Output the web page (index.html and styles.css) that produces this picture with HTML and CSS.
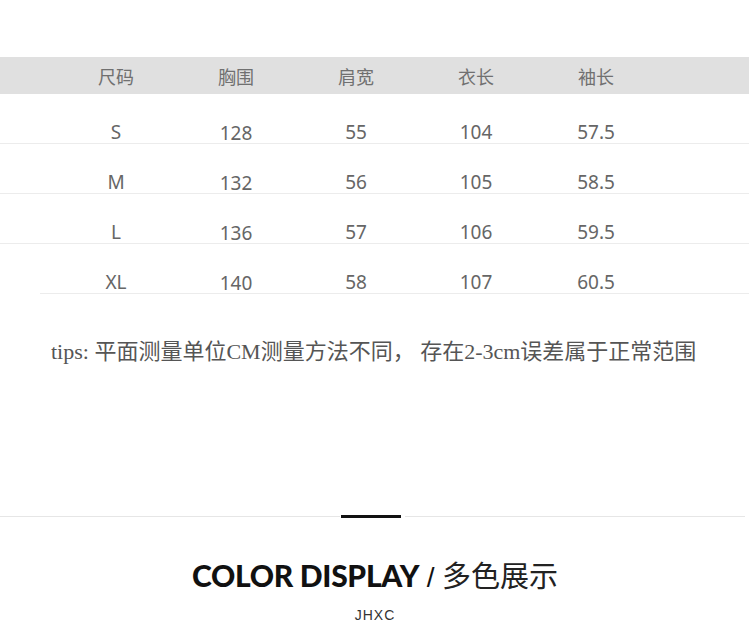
FILE: index.html
```html
<!DOCTYPE html>
<html lang="zh">
<head>
<meta charset="utf-8">
<link rel="stylesheet" href="styles.css">
</head>
<body>
<div class="page">
  <div class="size-table">
    <div class="row head">
      <span>尺码</span><span>胸围</span><span>肩宽</span><span>衣长</span><span>袖长</span>
    </div>
    <div class="row">
      <span>S</span><span class="n">128</span><span>55</span><span>104</span><span>57.5</span>
    </div>
    <div class="row">
      <span>M</span><span class="n">132</span><span>56</span><span>105</span><span>58.5</span>
    </div>
    <div class="row">
      <span>L</span><span class="n">136</span><span>57</span><span>106</span><span>59.5</span>
    </div>
    <div class="row last">
      <span>XL</span><span class="n">140</span><span>58</span><span>107</span><span>60.5</span>
    </div>
  </div>
  <p class="tips">tips: 平面测量单位CM测量方法不同， 存在2-3cm误差属于正常范围</p>
  <div class="divider">
    <span class="thin"></span><span class="bar"></span><span class="thin right"></span>
  </div>
  <h2 class="title"><span class="en">COLOR DISPLAY</span> <span class="slash">/</span> <span class="cn">多色展示</span></h2>
  <div class="brand">JHXC</div>
</div>
</body>
</html>
```
FILE: styles.css
```css
html, body {
  margin: 0;
  padding: 0;
  background: #fff;
}
.page {
  width: 750px;
  height: 638px;
  overflow: hidden;
  padding-top: 57px;
  box-sizing: border-box;
}
.size-table {
  width: 749px;
}
.row {
  display: grid;
  grid-template-columns: repeat(5, 120px);
  padding-left: 56px;
  height: 49px;
  align-items: end;
  border-bottom: 1px solid #ececec;
  font-family: "Noto Sans", "Noto Sans CJK SC", sans-serif;
  font-size: 19px;
  line-height: 22px;
  color: #666;
}
.row span {
  text-align: center;
}
.row .n {
  position: relative;
  top: 1px;
}
.row.head {
  height: 37px;
  align-items: center;
  background: #e0e0e0;
  border-bottom: none;
  font-family: "Noto Sans CJK SC", sans-serif;
  font-size: 18px;
  color: #707070;
}
.row.last {
  margin-left: 40px;
  padding-left: 16px;
}
.tips {
  margin: 43px 0 0 51px;
  font-family: "Liberation Serif", "Noto Sans CJK SC", serif;
  font-size: 22px;
  line-height: 30px;
  color: #555;
}
.divider {
  margin-top: 148px;
  display: flex;
  align-items: center;
  width: 745px;
}
.thin {
  flex: 1;
  height: 1px;
  background: #e6e6e6;
}
.bar {
  width: 60px;
  height: 3px;
  background: #111;
  margin: 0 4px 0 1px;
}
.title {
  margin: 38px 0 0;
  text-align: center;
  font-size: 30px;
  line-height: 36px;
  color: #111;
  font-weight: normal;
}
.title .en {
  font-family: "Lato", "Liberation Sans", sans-serif;
  font-weight: 900;
  letter-spacing: -0.3px;
}
.title .slash {
  font-family: "Liberation Sans", sans-serif;
  font-size: 28px;
}
.title .cn {
  font-family: "Noto Sans CJK SC", sans-serif;
  font-size: 29px;
  color: #222;
}
.brand {
  margin-top: 11px;
  text-align: center;
  font-family: "Liberation Sans", sans-serif;
  font-size: 14px;
  letter-spacing: 1px;
  color: #333;
}
```
